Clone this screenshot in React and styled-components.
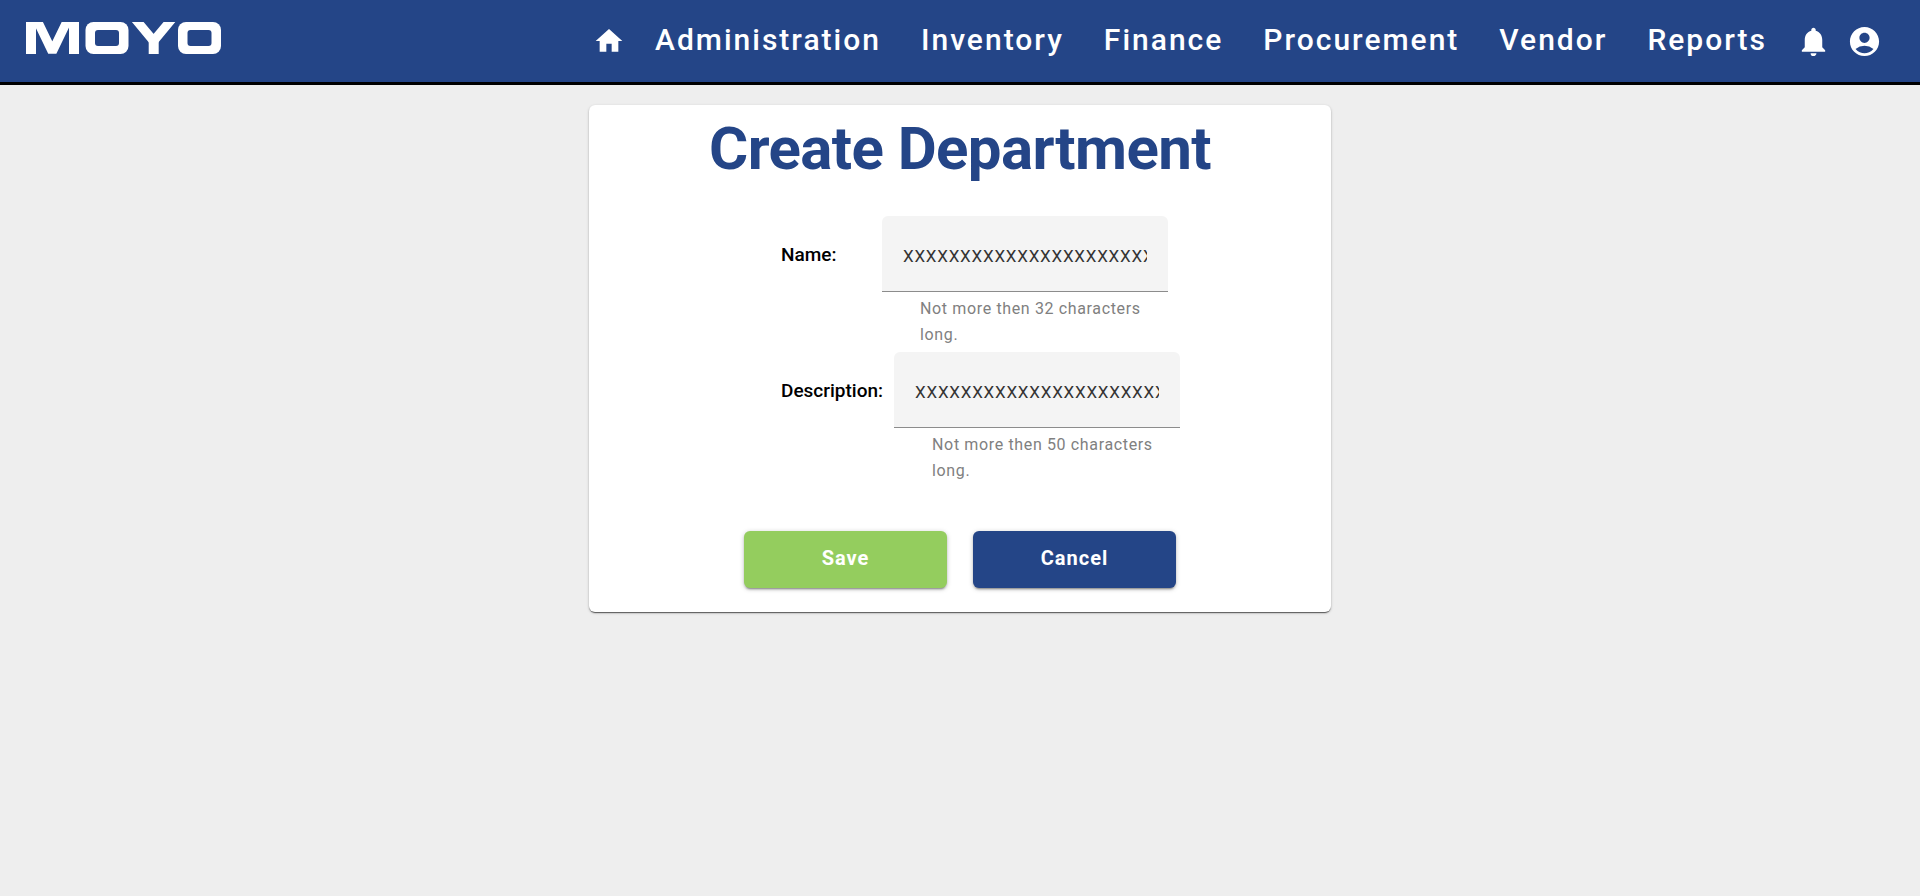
import React from "react";
import styled, { createGlobalStyle } from "styled-components";
import { MdHome, MdNotifications, MdAccountCircle } from "react-icons/md";

const BLUE = "#244587";
const GREEN = "#94cd5e";

const GlobalStyle = createGlobalStyle`
  *, *::before, *::after { box-sizing: border-box; }
  body {
    margin: 0;
    background: #eee;
    font-family: Roboto, "Liberation Sans", sans-serif;
  }
`;

const Page = styled.div`
  display: flex;
  flex-direction: column;
  min-height: 100vh;
  padding-bottom: 20px;
  background: #eee;
`;

const Header = styled.header`
  display: flex;
  align-items: center;
  justify-content: space-between;
  height: 85px;
  padding: 0 38px 0 26px;
  background: ${BLUE};
  border-bottom: 3px solid #000;
`;

const LogoLink = styled.a`
  display: flex;
  margin-bottom: 6px;
`;

const Nav = styled.nav`
  display: flex;
  align-items: center;
  gap: 16px;
`;

const NavList = styled.ul`
  display: flex;
  gap: 40px;
  margin: 0 13px 2px 14px;
  padding: 0;
  list-style: none;
`;

const NavLink = styled.a`
  color: #fff;
  font-size: 30px;
  font-weight: 500;
  line-height: 32px;
  letter-spacing: 2px;
  text-decoration: none;
`;

const IconLink = styled.a`
  display: flex;
  color: #fff;
  font-size: ${(p) => p.$size}px;
`;

const Card = styled.main`
  width: 742px;
  max-width: 100%;
  margin: 20px auto 0;
  padding: 8px 24px 24px;
  background: #fff;
  border-radius: 6px;
  box-shadow: 0 2px 1px -1px rgba(0, 0, 0, 0.4), 0 1px 1px rgba(0, 0, 0, 0.24),
    0 1px 3px rgba(0, 0, 0, 0.22);
`;

const Title = styled.h1`
  margin: 0 0 31px;
  color: ${BLUE};
  font-size: 60px;
  font-weight: 700;
  line-height: 72px;
  letter-spacing: -0.01em;
  text-align: center;
`;

const Form = styled.form`
  display: flex;
  flex-direction: column;
`;

const Row = styled.div`
  display: flex;
  align-items: flex-start;
  min-height: 136px;
  padding-left: 168px;
`;

const Label = styled.label`
  min-width: 101px;
  padding-right: 11px;
  font-size: 19px;
  font-weight: 500;
  line-height: 78px;
`;

const Field = styled.div`
  width: 286px;
`;

const TextInput = styled.input`
  display: block;
  width: 100%;
  height: 76px;
  padding: 4px 21px 0;
  border: 0;
  border-bottom: 1px solid #8c8c8c;
  border-radius: 6px 6px 0 0;
  outline: 0;
  background: #f4f4f4;
  color: #333;
  font-family: inherit;
  font-size: 17px;
  letter-spacing: 0.045em;
`;

const Hint = styled.p`
  margin: 0;
  padding: 4px 0 0 38px;
  color: #808080;
  font-size: 16px;
  line-height: 26px;
  letter-spacing: 0.04em;
`;

const Actions = styled.div`
  display: flex;
  justify-content: center;
  gap: 26px;
  margin-top: 43px;
`;

const Button = styled.button`
  width: 203px;
  height: 57px;
  padding: 0 0 3px;
  border: 0;
  border-radius: 6px;
  background: ${(p) => p.$color};
  color: #fff;
  font-family: inherit;
  font-size: 20px;
  font-weight: 700;
  letter-spacing: 1px;
  cursor: pointer;
  box-shadow: 0 3px 1px -2px rgba(0, 0, 0, 0.2), 0 2px 2px rgba(0, 0, 0, 0.14),
    0 1px 5px rgba(0, 0, 0, 0.22);
`;

const LINKS = ["Administration", "Inventory", "Finance", "Procurement", "Vendor", "Reports"];

const FIELDS = [
  { id: "name", label: "Name:", value: "X".repeat(32), max: 32 },
  { id: "description", label: "Description:", value: "X".repeat(50), max: 50 },
];

function Logo() {
  return (
    <svg width="196" height="32" viewBox="0 0 196 32" role="img" aria-label="MOYO">
      <g fill="none" stroke="#fff">
        <path d="M5 0V32M48 0V32" strokeWidth="10" />
        <polyline points="10.5,-3 26.3,29.8 42.1,-3" strokeWidth="9" strokeLinejoin="bevel" />
        <polyline points="108.6,-3.8 127.6,19 146.6,-3.8" strokeWidth="9" strokeLinejoin="bevel" />
        <path d="M127.7 18V32" strokeWidth="10" />
      </g>
      <rect x="59.5" width="43" height="32" rx="8" fill="#fff" />
      <rect x="69" y="8" width="24" height="16" rx="3" fill={BLUE} />
      <rect x="152" width="43" height="32" rx="8" fill="#fff" />
      <rect x="161.5" y="8" width="24" height="16" rx="3" fill={BLUE} />
    </svg>
  );
}

export default function App() {
  return (
    <Page>
      <GlobalStyle />
      <Header>
        <LogoLink href="#">
          <Logo />
        </LogoLink>
        <Nav>
          <IconLink href="#" $size={32} aria-label="Home">
            <MdHome />
          </IconLink>
          <NavList>
            {LINKS.map((name) => (
              <li key={name}>
                <NavLink href="#">{name}</NavLink>
              </li>
            ))}
          </NavList>
          <IconLink href="#" $size={35} aria-label="Notifications">
            <MdNotifications />
          </IconLink>
          <IconLink href="#" $size={35} aria-label="Account">
            <MdAccountCircle />
          </IconLink>
        </Nav>
      </Header>
      <Card>
        <Title>Create Department</Title>
        <Form onSubmit={(e) => e.preventDefault()}>
          {FIELDS.map((f) => (
            <Row key={f.id}>
              <Label htmlFor={f.id}>{f.label}</Label>
              <Field>
                <TextInput id={f.id} type="text" defaultValue={f.value} aria-describedby={`${f.id}-hint`} />
                <Hint id={`${f.id}-hint`}>{`Not more then ${f.max} characters long.`}</Hint>
              </Field>
            </Row>
          ))}
          <Actions>
            <Button type="submit" $color={GREEN}>Save</Button>
            <Button type="button" $color={BLUE}>Cancel</Button>
          </Actions>
        </Form>
      </Card>
    </Page>
  );
}
